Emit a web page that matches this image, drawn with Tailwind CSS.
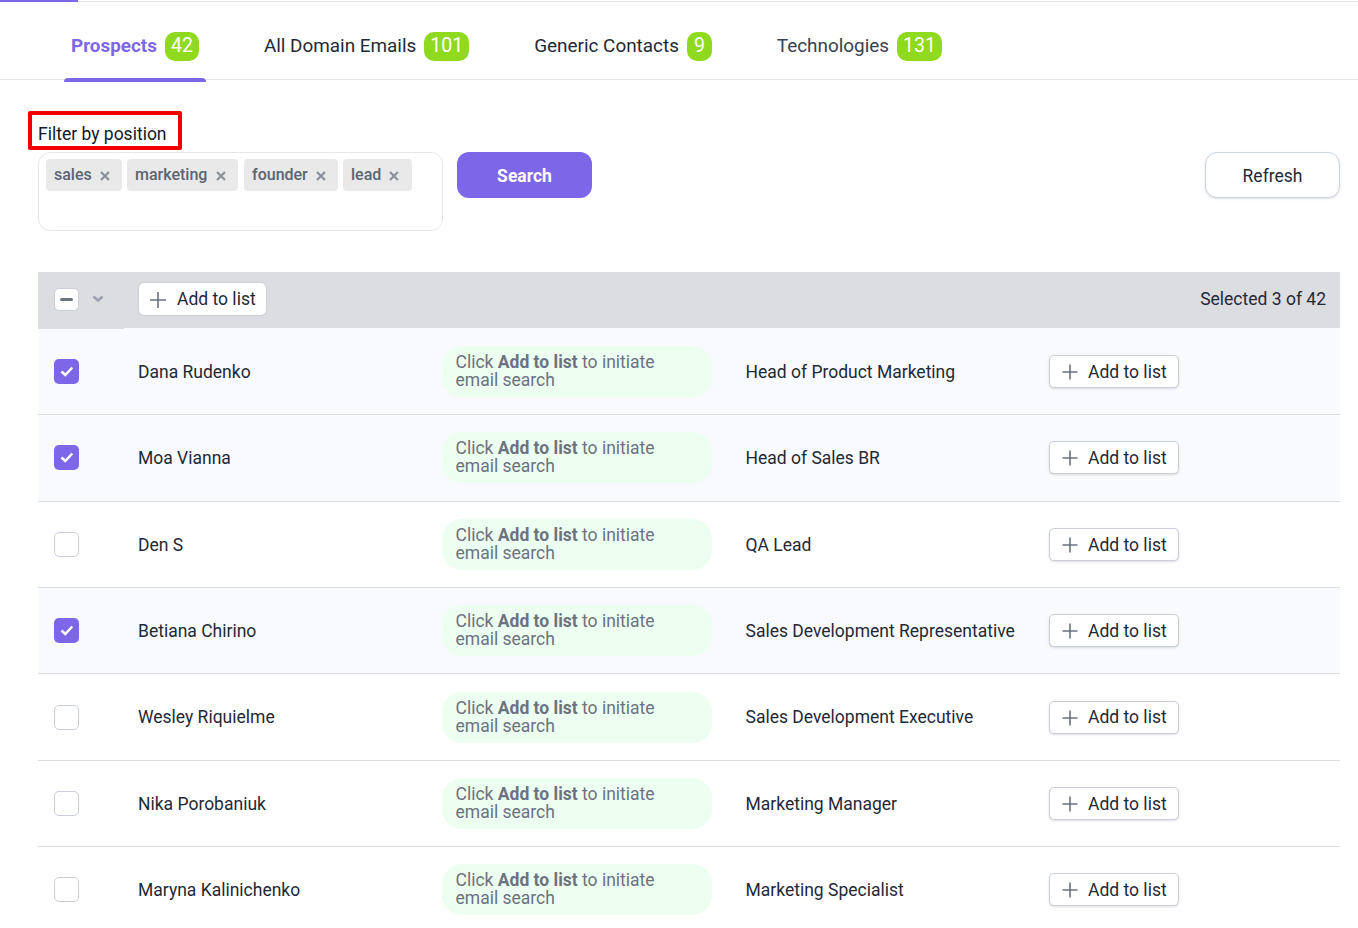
<!DOCTYPE html>
<html>
<head>
  <title>Prospects</title>
  <script src="https://cdn.jsdelivr.net/npm/@tailwindcss/browser@4"></script>
</head>
<body class="bg-white font-['Roboto',sans-serif] text-[17.5px] text-[#1f2937] overflow-hidden">
  <div class="h-[2px] border-b border-[#e5e7eb] relative">
    <div class="absolute left-0 top-0 h-[2px] w-[78px] bg-[#7e66e9]"></div>
  </div>

  <!-- tabs -->
  <nav class="h-[78px] border-b border-[#e5e7eb] flex gap-[51px] pl-[64px] text-[18.9px]">
    <a class="relative flex items-center gap-[8px] px-[7px] pt-[10px] h-[78px] font-bold text-[#7e66e9]">
      Prospects <span class="h-[29px] px-[6px] flex items-center rounded-[10px] bg-[#8fd91f] text-white text-[19.5px] font-normal">42</span>
      <span class="absolute left-0 right-0 bottom-[-2px] h-[4px] rounded-t-[4px] bg-[#7e66e9]"></span>
    </a>
    <a class="flex items-center gap-[8px] px-[7px] pt-[10px] h-[78px]">
      All Domain Emails <span class="h-[29px] px-[6px] flex items-center rounded-[10px] bg-[#8fd91f] text-white text-[19.5px]">101</span>
    </a>
    <a class="flex items-center gap-[8px] px-[7px] pt-[10px] h-[78px]">
      Generic Contacts <span class="h-[29px] px-[7px] flex items-center rounded-[10px] bg-[#8fd91f] text-white text-[19.5px]">9</span>
    </a>
    <a class="flex items-center gap-[8px] px-[7px] pt-[10px] h-[78px] text-[#374151]">
      Technologies <span class="h-[29px] px-[6px] flex items-center rounded-[10px] bg-[#8fd91f] text-white text-[19.5px]">131</span>
    </a>
  </nav>

  <main class="pr-[18px] pl-[38px]">
    <!-- filter -->
    <div class="relative pt-[41px] h-[72px]">
      <label class="leading-[26px] block text-[#111827]">Filter by position</label>
      <div class="absolute left-[-10px] top-[31px] w-[154px] h-[39px] border-[4px] border-[#f00000] rounded-[2px]"></div>
    </div>
    <div class="flex items-start">
      <div class="w-[405px] h-[79px] border border-[#e5e7eb] rounded-[12px] pt-[6px] pl-[7px] flex items-start gap-[5px]">
        <span class="h-[32px] w-[76px] pl-[8px] rounded-[4px] bg-[#e9e9e9] text-[#5b6472] text-[16px] font-medium flex items-center gap-[8px]">sales <svg class="w-[10px] h-[10px] mt-[1px]" viewBox="0 0 10 10"><path d="M1 1l8 8M9 1l-8 8" stroke="#8b919b" stroke-width="2.200"/></svg></span>
        <span class="h-[32px] w-[111px] pl-[8px] rounded-[4px] bg-[#e9e9e9] text-[#5b6472] text-[16px] font-medium flex items-center gap-[9px]">marketing <svg class="w-[10px] h-[10px] mt-[1px]" viewBox="0 0 10 10"><path d="M1 1l8 8M9 1l-8 8" stroke="#8b919b" stroke-width="2.200"/></svg></span>
        <span class="h-[32px] w-[94px] ml-[1px] pl-[8px] rounded-[4px] bg-[#e9e9e9] text-[#5b6472] text-[16px] font-medium flex items-center gap-[8px]">founder <svg class="w-[10px] h-[10px] mt-[1px]" viewBox="0 0 10 10"><path d="M1 1l8 8M9 1l-8 8" stroke="#8b919b" stroke-width="2.200"/></svg></span>
        <span class="h-[32px] w-[69px] pl-[8px] rounded-[4px] bg-[#e9e9e9] text-[#5b6472] text-[16px] font-medium flex items-center gap-[8px]">lead <svg class="w-[10px] h-[10px] mt-[1px]" viewBox="0 0 10 10"><path d="M1 1l8 8M9 1l-8 8" stroke="#8b919b" stroke-width="2.200"/></svg></span>
      </div>
      <button class="ml-[14px] w-[135px] h-[46px] pt-[2px] rounded-[12px] bg-[#7e66e9] text-white font-bold">Search</button>
      <button class="ml-auto w-[135px] h-[46px] pt-[2px] rounded-[12px] bg-white border border-[#cbd5e1] shadow-sm">Refresh</button>
    </div>

    <!-- table -->
    <div class="mt-[41px] relative">
      <div class="h-[56px] bg-[#dcdde0] flex items-center pb-[2px] relative">
        <div class="absolute left-0 top-[56px] w-[86px] h-[1px] bg-[#dcdde0]"></div>
        <span class="ml-[16px] w-[25px] h-[23px] rounded-[5px] bg-white border border-[#c9ced8] flex items-center justify-center"><span class="w-[13px] h-[3px] bg-[#6b7280] rounded-full"></span></span>
        <svg class="ml-[13px] w-[12px] h-[8px]" viewBox="0 0 12 8"><path d="M1.500 1.500L6 5.500l4.500-4" fill="none" stroke="#9ca3af" stroke-width="2.500"/></svg>
        <button class="ml-[35px] w-[127px] h-[32px] pt-[1px] rounded-[5px] bg-white shadow-[0_0_2px_#aab2c0] flex items-center pl-[11px] gap-[11px]"><svg class="w-[16px] h-[16px]" viewBox="0 0 16 16"><path d="M8 0v16M0 8h16" stroke="#6b7280" stroke-width="1.600"/></svg>Add to list</button>
        <span class="ml-auto mr-[14px]">Selected 3 of 42</span>
      </div>
      <div id="rows" class="pt-[0.800px] bg-[#f8fafe]"></div>
    </div>
  </main>

  <script>
    var people = [
      { name: "Dana Rudenko", title: "Head of Product Marketing", on: true },
      { name: "Moa Vianna", title: "Head of Sales BR", on: true },
      { name: "Den S", title: "QA Lead", on: false },
      { name: "Betiana Chirino", title: "Sales Development Representative", on: true },
      { name: "Wesley Riquielme", title: "Sales Development Executive", on: false },
      { name: "Nika Porobaniuk", title: "Marketing Manager", on: false },
      { name: "Maryna Kalinichenko", title: "Marketing Specialist", on: false }
    ];

    var checked = '<span class="ml-[16px] w-[25px] h-[25px] rounded-[5px] bg-[#7e66e9] flex items-center justify-center"><svg class="w-[14px] h-[11px]" viewBox="0 0 14 11"><path d="M1.500 5.500l3.800 3.500 7-7.500" fill="none" stroke="white" stroke-width="2.500"/></svg></span>';
    var empty = '<span class="ml-[16px] w-[25px] h-[25px] rounded-[5px] bg-white border border-[#c9ced8]"></span>';

    document.getElementById("rows").innerHTML = people.map(function(p) {
      return '<div class="h-[86.4px] border-b border-[#dcdee3] grid grid-cols-[100px_304px_303.500px_303.500px_1fr] items-center ' + (p.on ? 'bg-[#f8fafe]' : 'bg-white') + '">'
        + '<div class="flex">' + (p.on ? checked : empty) + '</div>'
        + '<div class="pt-[1px]">' + p.name + '</div>'
        + '<div class="w-[270px] h-[51px] rounded-[20px] bg-[#edfff0] pl-[13.500px] pt-[7px] leading-[18px] text-[#6b7280]">Click <b>Add to list</b> to initiate<br>email search</div>'
        + '<div class="pt-[1px]">' + p.title + '</div>'
        + '<div><button class="w-[130px] h-[33px] pt-[1px] rounded-[5px] bg-white border border-[#c9ced8] shadow-sm flex items-center pl-[12px] gap-[10px]"><svg class="w-[16px] h-[16px]" viewBox="0 0 16 16"><path d="M8 0.500v15M0.500 8h15" stroke="#6b7280" stroke-width="1.600"/></svg>Add to list</button></div>'
        + '</div>';
    }).join("");
  </script>
</body>
</html>
